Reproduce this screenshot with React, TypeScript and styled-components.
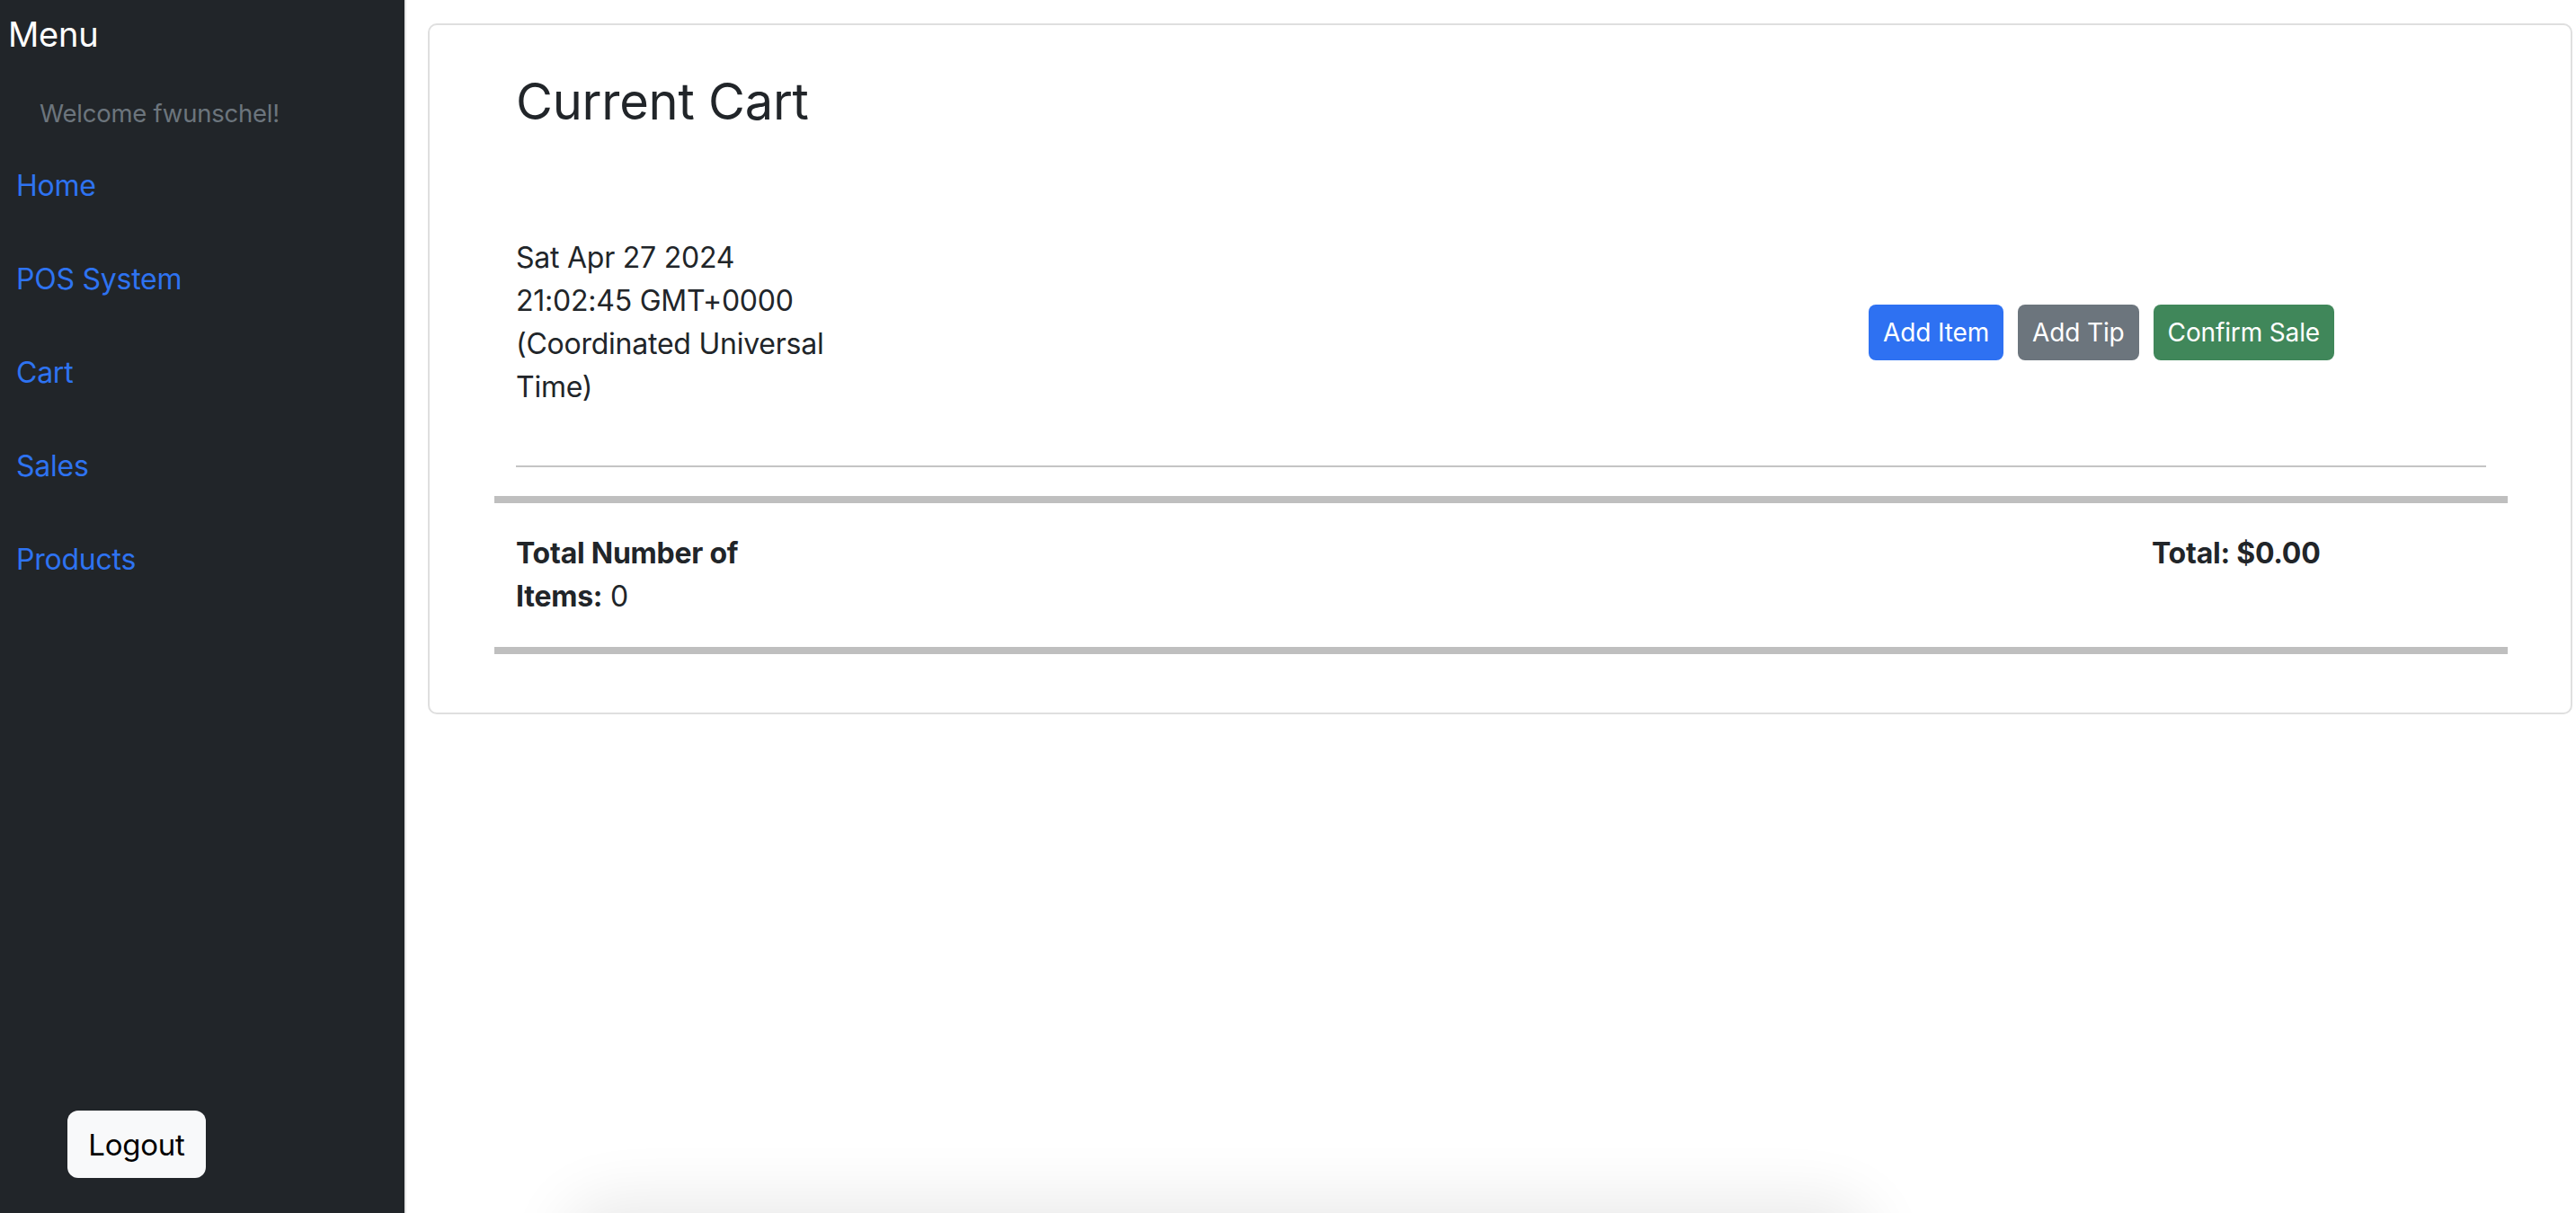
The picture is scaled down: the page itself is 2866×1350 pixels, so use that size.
import React from "react";
import styled, { createGlobalStyle } from "styled-components";

const GlobalStyle = createGlobalStyle`
  html, body {
    margin: 0;
    padding: 0;
    background: #ffffff;
  }
  body {
    font-family: Inter, "Noto Sans", "Liberation Sans", sans-serif;
    color: #212529;
    letter-spacing: -0.015em;
  }
  * { box-sizing: border-box; }
`;

const Layout = styled.div`
  display: flex;
  min-height: 100vh;
  height: 1350px;
  overflow: hidden;
`;

const Sidebar = styled.aside`
  width: 452px;
  flex: 0 0 452px;
  background: #212529;
  border-right: 2px solid #e6e6e6;
  display: flex;
  flex-direction: column;
`;

const MenuTitle = styled.div`
  color: #ffffff;
  font-size: 38px;
  line-height: 48px;
  padding: 14px 0 0 9px;
`;

const Welcome = styled.div`
  color: #6c757d;
  font-size: 27.5px;
  line-height: 48px;
  padding-left: 44px;
  margin-top: 40px;
`;

const NavList = styled.nav`
  display: flex;
  flex-direction: column;
  margin-top: 5px;
`;

const NavLink = styled.a`
  color: #2e73f1;
  font-size: 32px;
  line-height: 48px;
  height: 104px;
  display: flex;
  align-items: center;
  padding-left: 18px;
  text-decoration: none;
  cursor: pointer;
`;

const LogoutButton = styled.button`
  margin: auto 0 39px 75px;
  width: 154px;
  height: 75px;
  background: #f8f9fa;
  border: none;
  border-radius: 12px;
  color: #000000;
  font-family: inherit;
  letter-spacing: inherit;
  font-size: 33px;
  cursor: pointer;
`;

const Main = styled.main`
  flex: 1;
  padding: 26px 4px 0 24px;
  position: relative;
`;

const Card = styled.section`
  border: 2px solid #dfdfdf;
  border-radius: 10px;
  padding: 52px 94px 65px 96px;
  background: #ffffff;
`;

const Title = styled.h3`
  margin: 0;
  font-size: 56px;
  line-height: 67px;
  font-weight: 400;
  color: #212529;
`;

const CartHeader = styled.div`
  display: flex;
  align-items: center;
  margin-top: 116px;
  padding-right: 169px;
`;

const DateText = styled.div`
  width: 345px;
  font-size: 32px;
  line-height: 48px;
`;

const ButtonGroup = styled.div`
  display: flex;
  gap: 16px;
  margin-left: auto;
  margin-top: 22px;
`;

const ActionButton = styled.button<{ $variant: "primary" | "secondary" | "success" }>`
  height: 62px;
  padding: 0 16px;
  border: none;
  border-radius: 8px;
  font-family: inherit;
  letter-spacing: -0.005em;
  font-size: 28px;
  color: #ffffff;
  cursor: pointer;
  background: ${(p) =>
    p.$variant === "primary" ? "#2e71f2" : p.$variant === "secondary" ? "#6c757d" : "#40875a"};
`;

const ThinRule = styled.hr`
  margin: 63px 0 0 0;
  border: none;
  border-top: 2px solid #c4c4c4;
  height: 0;
`;

const ThickRule = styled.div`
  margin: 32px -24px 0 -24px;
  height: 8px;
  background: #bfbfbf;
`;

const TotalsRow = styled.div`
  display: flex;
  justify-content: space-between;
  margin-top: 32px;
  font-size: 32px;
  line-height: 48px;
`;

const TotalsItems = styled.div`
  width: 345px;
`;

const TotalAmount = styled.div`
  width: 372px;
  font-weight: 700;
`;

const Strong = styled.strong`
  font-weight: 700;
`;

const BottomShadow = styled.div`
  position: fixed;
  left: 640px;
  width: 1430px;
  top: 1350px;
  height: 80px;
  border-radius: 40px;
  box-shadow: 0 0 70px 14px rgba(0, 0, 0, 0.09);
  pointer-events: none;
`;

const navItems = ["Home", "POS System", "Cart", "Sales", "Products"];

export default function App() {
  return (
    <>
      <GlobalStyle />
      <Layout>
        <Sidebar>
          <MenuTitle>Menu</MenuTitle>
          <Welcome>Welcome fwunschel!</Welcome>
          <NavList>
            {navItems.map((item) => (
              <NavLink key={item}>{item}</NavLink>
            ))}
          </NavList>
          <LogoutButton>Logout</LogoutButton>
        </Sidebar>
        <Main>
          <Card>
            <Title>Current Cart</Title>
            <CartHeader>
              <DateText>Sat Apr 27 2024 21:02:45 GMT+0000 (Coordinated Universal Time)</DateText>
              <ButtonGroup>
                <ActionButton $variant="primary">Add Item</ActionButton>
                <ActionButton $variant="secondary">Add Tip</ActionButton>
                <ActionButton $variant="success">Confirm Sale</ActionButton>
              </ButtonGroup>
            </CartHeader>
            <ThinRule />
            <ThickRule />
            <TotalsRow>
              <TotalsItems>
                <Strong>Total Number of Items:</Strong> 0
              </TotalsItems>
              <TotalAmount>Total: $0.00</TotalAmount>
            </TotalsRow>
            <ThickRule />
          </Card>
          <BottomShadow />
        </Main>
      </Layout>
    </>
  );
}
